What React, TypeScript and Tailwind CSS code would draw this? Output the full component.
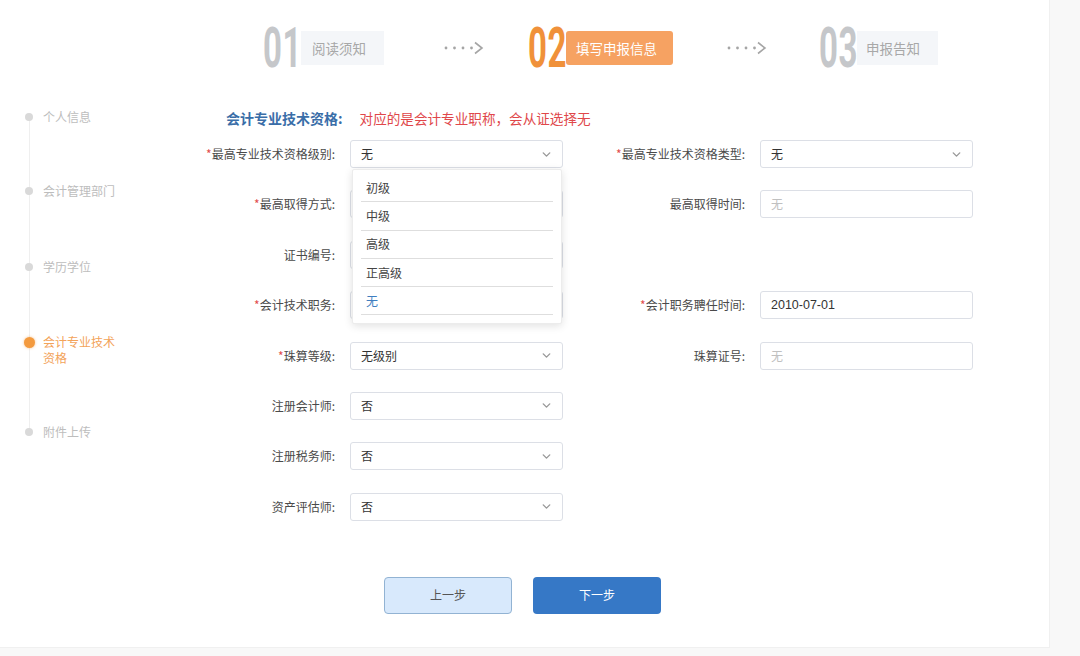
import React from "react";
import { ChevronDown } from "lucide-react";

const FONT = { fontFamily: "'Noto Sans CJK SC', 'Noto Sans', sans-serif" };

function Digits({ text, color }: { text: string; color: string }) {
  return (
    <span className="inline-block w-[38px] h-[40px] overflow-visible">
      <span
        className={`block origin-top-left scale-x-[0.6] text-[55px] leading-[40px] font-bold tracking-[1px] whitespace-nowrap ${color}`}
        style={{ fontFamily: "Roboto, 'Liberation Sans', sans-serif" }}
      >
        {text}
      </span>
    </span>
  );
}

function Arrow() {
  return (
    <svg width="44" height="14" viewBox="0 0 44 14" className="block">
      <circle cx="2" cy="7" r="1.4" fill="#a5a5a5" />
      <circle cx="10.5" cy="7" r="1.4" fill="#a5a5a5" />
      <circle cx="19" cy="7" r="1.4" fill="#a5a5a5" />
      <circle cx="27.5" cy="7" r="1.4" fill="#a5a5a5" />
      <polyline points="31,1.5 38,7 31,12.5" fill="none" stroke="#a5a5a5" strokeWidth="1.6" strokeLinejoin="miter" />
    </svg>
  );
}

function Label({ text, req, w }: { text: string; req?: boolean; w: string }) {
  return (
    <div className={`${w} shrink-0 text-right text-[12px] leading-[28px] text-[#4a4a4a] whitespace-nowrap`}>
      {req && <span className="text-[#e24c4c]">*</span>}
      {text}
    </div>
  );
}

function Select({ value }: { value: string }) {
  return (
    <div className="w-[213px] h-[28px] shrink-0 flex items-center justify-between pl-[10px] pr-[9px] border border-[#dcdfe6] rounded-[3px] bg-white">
      <span className="text-[12px] text-[#333]">{value}</span>
      <ChevronDown size={13} strokeWidth={2.6} color="#999999" />
    </div>
  );
}

function Input({ value, placeholder }: { value?: string; placeholder?: string }) {
  return (
    <div className="w-[213px] h-[28px] shrink-0 flex items-center pl-[10px] border border-[#dcdfe6] rounded-[3px] bg-white">
      {value ? (
        <span className="text-[12.5px] text-[#333]" style={{ fontFamily: "'Liberation Sans', 'Noto Sans CJK SC', sans-serif" }}>{value}</span>
      ) : (
        <span className="text-[12px] text-[#c0c0c0]">{placeholder}</span>
      )}
    </div>
  );
}

function SideItem({ text, h, active }: { text: React.ReactNode; h: string; active?: boolean }) {
  return (
    <div className={`${h} flex items-start relative`}>
      <div className="w-[12px] h-[16px] ml-[23px] flex items-center justify-center relative z-10">
        {active ? (
          <span className="w-[11px] h-[11px] rounded-full bg-[#f39a3e] shadow-[0_0_3px_rgba(243,154,62,0.6)]" />
        ) : (
          <span className="w-[8px] h-[8px] rounded-full bg-[#d9d9d9]" />
        )}
      </div>
      <div className={`ml-[8px] text-[12px] leading-[16px] ${active ? "text-[#f3a35a]" : "text-[#bdbdbd]"}`}>{text}</div>
    </div>
  );
}

const options = ["初级", "中级", "高级", "正高级", "无"];

export default function App() {
  return (
    <div className="w-[1080px] h-[656px] bg-[#f8f8f8] overflow-hidden" style={FONT}>
      <div className="w-[1050px] h-[648px] bg-white border-r border-b border-[#f0f0f0] flex flex-col">
        {/* Stepper */}
        <div className="h-[100px] shrink-0 pt-[28px] flex items-start">
          <div className="flex items-center h-[40px] ml-[263px]">
            <Digits text="01" color="text-[#c5c7ca]" />
            <div className="h-[34px] w-[83px] bg-[#f4f6f9] flex items-center pl-[11px] text-[13.5px] text-[#a8a8a8]">阅读须知</div>
          </div>
          <div className="h-[40px] flex items-center ml-[60px]">
            <Arrow />
          </div>
          <div className="flex items-center h-[40px] ml-[40px]">
            <Digits text="02" color="text-[#f0913a]" />
            <div className="h-[34px] w-[107px] bg-[#f6a262] rounded-[3px] flex items-center pl-[10px] text-[13.5px] text-white">填写申报信息</div>
          </div>
          <div className="h-[40px] flex items-center ml-[54px]">
            <Arrow />
          </div>
          <div className="flex items-center h-[40px] ml-[48px]">
            <Digits text="03" color="text-[#c5c7ca]" />
            <div className="h-[34px] w-[81px] bg-[#f4f6f9] flex items-center pl-[9px] text-[13.5px] text-[#a8a8a8]">申报告知</div>
          </div>
        </div>

        {/* Body */}
        <div className="flex flex-1">
          {/* Sidebar */}
          <div className="w-[150px] shrink-0 pt-[9px] relative">
            <div className="absolute left-[28.5px] top-[17px] w-px h-[312px] bg-[#efefef]" />
            <SideItem h="h-[74px]" text="个人信息" />
            <SideItem h="h-[76px]" text="会计管理部门" />
            <SideItem h="h-[75px]" text="学历学位" />
            <SideItem h="h-[90px]" active text={<>会计专业技术<br />资格</>} />
            <SideItem h="h-[20px]" text="附件上传" />
          </div>

          {/* Form */}
          <div className="flex-1 pt-[8px] flex flex-col">
            <div className="h-[20px] flex items-center pl-[76px]">
              <span className="text-[14px] font-bold text-[#3a6ea8]">会计专业技术资格:</span>
              <span className="ml-[17px] text-[13.6px] text-[#e0474a]">对应的是会计专业职称，会从证选择无</span>
            </div>

            <div className="mt-[12px] flex flex-col gap-[22.4px]">
              {/* Row 1 */}
              <div className="flex h-[28px]">
                <Label w="w-[185px]" req text="最高专业技术资格级别:" />
                <div className="ml-[15px] relative">
                  <Select value="无" />
                  <div className="absolute left-[2px] top-[29px] w-[210px] z-20 bg-white border border-[#ececec] shadow-[0_2px_8px_rgba(0,0,0,0.12)] rounded-[2px] pt-[4px] pb-[8px]">
                    {options.map((o) => (
                      <div key={o} className="mx-[8px] h-[28.3px] border-b border-[#dedede] flex items-center pl-[5px]">
                        <span className={`text-[12px] ${o === "无" ? "text-[#3f7ec0]" : "text-[#444]"}`}>{o}</span>
                      </div>
                    ))}
                  </div>
                </div>
                <Label w="w-[182px]" req text="最高专业技术资格类型:" />
                <div className="ml-[15px]"><Select value="无" /></div>
              </div>
              {/* Row 2 */}
              <div className="flex h-[28px]">
                <Label w="w-[185px]" req text="最高取得方式:" />
                <div className="ml-[15px]"><Select value="" /></div>
                <Label w="w-[182px]" text="最高取得时间:" />
                <div className="ml-[15px]"><Input placeholder="无" /></div>
              </div>
              {/* Row 3 */}
              <div className="flex h-[28px]">
                <Label w="w-[185px]" text="证书编号:" />
                <div className="ml-[15px]"><Input placeholder="" /></div>
              </div>
              {/* Row 4 */}
              <div className="flex h-[28px]">
                <Label w="w-[185px]" req text="会计技术职务:" />
                <div className="ml-[15px]"><Select value="" /></div>
                <Label w="w-[182px]" req text="会计职务聘任时间:" />
                <div className="ml-[15px]"><Input value="2010-07-01" /></div>
              </div>
              {/* Row 5 */}
              <div className="flex h-[28px]">
                <Label w="w-[185px]" req text="珠算等级:" />
                <div className="ml-[15px]"><Select value="无级别" /></div>
                <Label w="w-[182px]" text="珠算证号:" />
                <div className="ml-[15px]"><Input placeholder="无" /></div>
              </div>
              {/* Row 6 */}
              <div className="flex h-[28px]">
                <Label w="w-[185px]" text="注册会计师:" />
                <div className="ml-[15px]"><Select value="否" /></div>
              </div>
              {/* Row 7 */}
              <div className="flex h-[28px]">
                <Label w="w-[185px]" text="注册税务师:" />
                <div className="ml-[15px]"><Select value="否" /></div>
              </div>
              {/* Row 8 */}
              <div className="flex h-[28px]">
                <Label w="w-[185px]" text="资产评估师:" />
                <div className="ml-[15px]"><Select value="否" /></div>
              </div>
            </div>

            <div className="mt-[56px] flex ml-[234px] gap-[21px]">
              <button className="w-[128px] h-[37px] rounded-[4px] bg-[#d8e9fc] border border-[#92b3d3] text-[12px] text-[#555]">上一步</button>
              <button className="w-[128px] h-[37px] rounded-[4px] bg-[#3678c6] text-[12px] text-white">下一步</button>
            </div>
          </div>
        </div>
      </div>
    </div>
  );
}
